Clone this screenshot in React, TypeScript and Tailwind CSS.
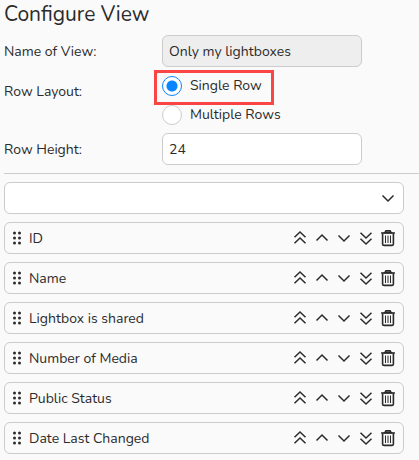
import React, { useState } from 'react'

const COLUMNS = ['ID', 'Name', 'Lightbox is shared', 'Number of Media', 'Public Status', 'Date Last Changed']

const ICON_PATHS = {
  top: ['M2.5 7.3 8 2l5.5 5.3', 'M2.5 13.3 8 8l5.5 5.3'],
  up: ['M2.5 10.5 8 5l5.5 5.5'],
  down: ['M2.5 5.5 8 11l5.5-5.5'],
  bottom: ['M2.5 2.7 8 8l5.5-5.3', 'M2.5 8.7 8 14l5.5-5.3']
}

interface ArrowIconProps {
  kind: keyof typeof ICON_PATHS
}

const ArrowIcon: React.FC<ArrowIconProps> = ({ kind }) => (
  <svg width="16" height="16" viewBox="0 0 16 16" fill="none" stroke="currentColor" strokeWidth="1.5">
    {ICON_PATHS[kind].map((d) => (
      <path key={d} d={d} />
    ))}
  </svg>
)

const TrashIcon: React.FC = () => (
  <svg width="16" height="18" viewBox="0 0 16 18" fill="none" stroke="currentColor">
    <path d="M1.2 4h13.6" strokeWidth="1.7" />
    <path d="M4.8 3.5 5.8 1.7h4.4l1 1.8z" fill="#777" strokeWidth="1.3" />
    <path d="M2.6 4.5v10.4c0 .9.6 1.5 1.5 1.5h7.8c.9 0 1.5-.6 1.5-1.5V4.5" strokeWidth="1.6" />
    <path d="M5.5 6.5v7.5M8 6.5v7.5M10.5 6.5v7.5" strokeWidth="1" />
  </svg>
)

const GripIcon: React.FC = () => (
  <svg width="10" height="14" viewBox="0 0 10 14" fill="currentColor">
    {[2, 7, 12].map((y) => (
      <React.Fragment key={y}>
        <circle cx="2.5" cy={y} r="1.5" />
        <circle cx="7.5" cy={y} r="1.5" />
      </React.Fragment>
    ))}
  </svg>
)

interface RadioProps {
  label: string
  checked: boolean
  highlighted?: boolean
  onSelect: () => void
}

const Radio: React.FC<RadioProps> = ({ label, checked, highlighted, onSelect }) => (
  <label className="relative flex h-[21px] items-end gap-2 cursor-pointer">
    <input
      type="radio"
      name="row-layout"
      checked={checked}
      onChange={onSelect}
      className="size-5 shrink-0 appearance-none rounded-full border border-[#ccc] bg-white checked:border-[#0a84ff] checked:bg-[radial-gradient(circle,#0a84ff_5px,white_6px)]"
    />
    <span className="leading-[21px]">{label}</span>
    {highlighted && (
      <span className="pointer-events-none absolute -top-[5px] -left-2 h-[35px] w-[120px] border-3 border-[#fb4545]" />
    )}
  </label>
)

interface ColumnRowProps {
  name: string
  onMove: (kind: keyof typeof ICON_PATHS) => void
  onRemove: () => void
}

const ColumnRow: React.FC<ColumnRowProps> = ({ name, onMove, onRemove }) => (
  <li className="flex h-8 items-center rounded-md border border-[#ccc] px-[7px]">
    <GripIcon />
    <span className="ml-[7px] flex-1">{name}</span>
    <div className="flex items-center gap-1.5">
      <button type="button" aria-label={`Move ${name} to top`} onClick={() => onMove('top')}>
        <ArrowIcon kind="top" />
      </button>
      <button type="button" aria-label={`Move ${name} up`} onClick={() => onMove('up')}>
        <ArrowIcon kind="up" />
      </button>
      <button type="button" aria-label={`Move ${name} down`} onClick={() => onMove('down')}>
        <ArrowIcon kind="down" />
      </button>
      <button type="button" aria-label={`Move ${name} to bottom`} onClick={() => onMove('bottom')}>
        <ArrowIcon kind="bottom" />
      </button>
      <button type="button" aria-label={`Remove ${name}`} onClick={onRemove}>
        <TrashIcon />
      </button>
    </div>
  </li>
)

export default function App() {
  const [layout, setLayout] = useState<'single' | 'multiple'>('single')
  const [height, setHeight] = useState('24')
  const [columns, setColumns] = useState(COLUMNS)

  const move = (index: number, kind: keyof typeof ICON_PATHS) => {
    const next = [...columns]
    const [item] = next.splice(index, 1)
    const target = { top: 0, up: Math.max(0, index - 1), down: index + 1, bottom: next.length }[kind]
    next.splice(target, 0, item)
    setColumns(next)
  }

  return (
    <main className="min-h-screen bg-[#fafafa] pb-1.5 pl-1 font-['Nunito','Lato',sans-serif] text-[14px] text-[#2b2b2b]">
      <h1 className="mb-1.5 text-[21px] leading-[29px]">Configure View</h1>

      <div className="grid grid-cols-[158px_minmax(0,200px)] gap-y-2">
        <label htmlFor="view-name" className="pt-0.5 leading-[30px]">
          Name of View:
        </label>
        <input
          id="view-name"
          readOnly
          value="Only my lightboxes"
          className="h-8 w-full rounded-md border border-[#ccc] bg-[#eee] px-1.5 outline-none"
        />

        <span id="row-layout-label" className="pt-0.5 leading-[30px]">
          Row Layout:
        </span>
        <div role="radiogroup" aria-labelledby="row-layout-label" className="flex flex-col items-start gap-2">
          <Radio label="Single Row" checked={layout === 'single'} highlighted onSelect={() => setLayout('single')} />
          <Radio label="Multiple Rows" checked={layout === 'multiple'} onSelect={() => setLayout('multiple')} />
        </div>

        <label htmlFor="row-height" className="pt-0.5 leading-[30px]">
          Row Height:
        </label>
        <input
          id="row-height"
          value={height}
          onChange={(e) => setHeight(e.target.value)}
          className="h-8 w-full rounded-md border border-[#ccc] bg-white px-1.5 outline-none"
        />
      </div>

      <hr className="my-2 border-[#ccc]" />

      <div className="flex flex-col gap-2 pr-[15px]">
        <div className="relative">
          <select
            aria-label="Add column"
            defaultValue=""
            className="block h-8 w-full appearance-none rounded-md border border-[#ccc] bg-white px-1.5 outline-none"
          >
            <option value="" />
          </select>
          <span className="pointer-events-none absolute top-2 right-2">
            <ArrowIcon kind="down" />
          </span>
        </div>
        <ul className="flex flex-col gap-2">
          {columns.map((name, i) => (
            <ColumnRow
              key={name}
              name={name}
              onMove={(kind) => move(i, kind)}
              onRemove={() => setColumns(columns.filter((c) => c !== name))}
            />
          ))}
        </ul>
      </div>
    </main>
  )
}
